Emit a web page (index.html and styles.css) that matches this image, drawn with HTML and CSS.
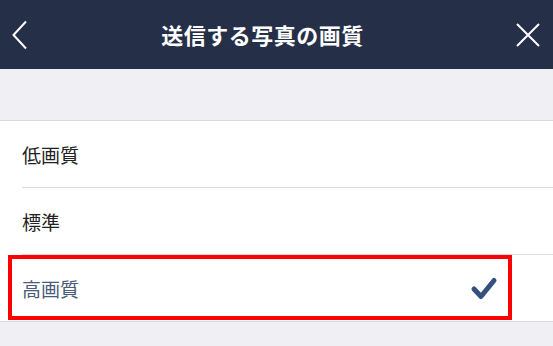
FILE: index.html
```html
<!DOCTYPE html>
<html lang="ja">
<head>
    <meta charset="UTF-8">
    <meta name="viewport" content="width=device-width, initial-scale=1.0">
    <title>送信する写真の画質</title>
    <link rel="stylesheet" href="styles.css">
</head>
<body>
    <div class="header">
        <div class="header-btn back">
            <svg width="18" height="30" viewBox="0 0 18 30">
                <path d="M15 1.5 L2.5 15 L15 28.5" fill="none" stroke="#fff" stroke-width="2"/>
            </svg>
        </div>
        <div class="title">送信する写真の画質</div>
        <div class="header-btn close">
            <svg width="26" height="26" viewBox="0 0 26 26">
                <path d="M2 2 L24 24 M24 2 L2 24" fill="none" stroke="#fff" stroke-width="2"/>
            </svg>
        </div>
    </div>
    <div class="spacer"></div>
    <div class="list">
        <div class="row">低画質</div>
        <div class="row">標準</div>
        <div class="row selected">
            高画質
            <svg class="check" width="28" height="26" viewBox="0 0 28 26">
                <path d="M4 14 L11 21.5 L24 5.5" fill="none" stroke="#34507f" stroke-width="5" stroke-linecap="round" stroke-linejoin="round"/>
            </svg>
            <div class="highlight"></div>
        </div>
    </div>
    <div class="bottom"></div>
</body>
</html>
```

FILE: styles.css
```css
body {
    margin: 0;
    padding: 0;
    font-family: "Noto Sans CJK JP", "Noto Sans", sans-serif;
    background: #efeff4;
    color: #222;
    width: 553px;
    height: 346px;
    overflow: hidden;
}
.header {
    height: 69px;
    background: #252f48;
    display: flex;
    align-items: center;
    color: white;
}
.header-btn {
    width: 60px;
    display: flex;
    align-items: center;
}
.back {
    padding-left: 11px;
    box-sizing: border-box;
}
.close {
    justify-content: flex-end;
    padding-right: 12px;
    box-sizing: border-box;
}
.title {
    flex: 1;
    text-align: center;
    font-size: 22px;
    font-weight: bold;
    margin-right: 28px;
    letter-spacing: 0.5px;
    line-height: 1;
    padding-bottom: 2px;
}
.spacer {
    height: 51px;
    border-bottom: 1px solid #d9d9de;
}
.list {
    background: white;
    border-bottom: 1px solid #dcdce0;
}
.row {
    height: 66px;
    display: flex;
    align-items: center;
    margin-left: 22px;
    padding-right: 55px;
    font-size: 19px;
    border-bottom: 1px solid #dcdcdf;
    position: relative;
}
.row:last-child {
    border-bottom: none;
}
.selected {
    color: #4a5a78;
    justify-content: space-between;
}
.check {
    display: block;
}
.highlight {
    position: absolute;
    left: -14px;
    top: 0;
    width: 504px;
    height: 65px;
    border: 4px solid #ff0000;
    box-sizing: border-box;
}
.bottom {
    height: 30px;
}
```
